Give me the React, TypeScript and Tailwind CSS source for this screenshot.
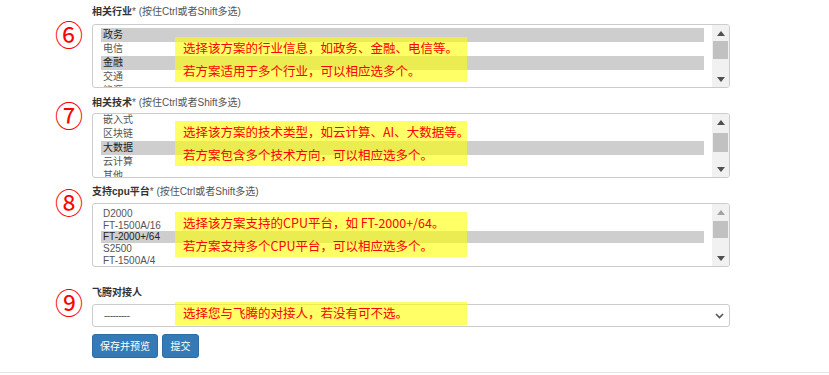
import React from 'react';

type Item = { label: string; sel?: boolean };

const industry: Item[] = [
  { label: '政务', sel: true },
  { label: '电信' },
  { label: '金融', sel: true },
  { label: '交通' },
  { label: '能源' },
];

const tech: Item[] = [
  { label: '嵌入式' },
  { label: '区块链' },
  { label: '大数据', sel: true },
  { label: '云计算' },
  { label: '其他' },
];

const cpu: Item[] = [
  { label: 'D2000' },
  { label: 'FT-1500A/16' },
  { label: 'FT-2000+/64', sel: true },
  { label: 'S2500' },
  { label: 'FT-1500A/4' },
];

function Arrow({ up, dim }: { up?: boolean; dim?: boolean }) {
  return (
    <div className="flex h-[16px] items-center justify-center">
      <svg width="8" height="5" viewBox="0 0 8 5">
        <path d={up ? 'M0 5 L4 0 L8 5 Z' : 'M0 0 L8 0 L4 5 Z'} fill={dim ? '#a3a3a3' : '#505050'} />
      </svg>
    </div>
  );
}

function ListBox({
  items,
  height,
  listClass,
  rowClass,
  thumbClass,
  upDim,
}: {
  items: Item[];
  height: string;
  listClass: string;
  rowClass: string;
  thumbClass: string;
  upDim?: boolean;
}) {
  return (
    <div className={`flex ${height} overflow-hidden rounded-[3px] border border-[#cccccc] bg-white`}>
      <div className={`flex-1 overflow-hidden px-2 ${listClass}`}>
        {items.map((it) => (
          <div
            key={it.label}
            className={`${rowClass} whitespace-nowrap pl-[2px] ${it.sel ? 'bg-[#cecece] text-[#222222]' : 'text-[#555555]'}`}
          >
            {it.label}
          </div>
        ))}
      </div>
      <div className="flex w-[17px] flex-col bg-[#f1f1f1]">
        <Arrow up dim={upDim} />
        <div className="flex-1">
          <div className={`mx-[1px] bg-[#c1c1c1] ${thumbClass}`} />
        </div>
        <Arrow />
      </div>
    </div>
  );
}

function Label({ title, hint }: { title: string; hint?: boolean }) {
  return (
    <div className="h-[14px] whitespace-nowrap text-[10px] leading-[14px] text-[#333333]">
      <span className="font-bold">{title}</span>
      {hint && <span className="text-[#555555]">* (按住Ctrl或者Shift多选)</span>}
    </div>
  );
}

function Note({ lines, className }: { lines: string[]; className: string }) {
  return (
    <div
      className={`absolute left-[175px] w-[292px] bg-[#ffff00]/60 pl-[8px] font-['Noto_Sans_CJK_SC',sans-serif] text-[12.5px] leading-[22.5px] text-[#ff0000] ${className}`}
    >
      {lines.map((l) => (
        <div key={l} className="whitespace-nowrap">
          {l}
        </div>
      ))}
    </div>
  );
}

function Num({ n, className }: { n: string; className: string }) {
  return (
    <div
      className={`absolute left-[54px] flex h-[30px] w-[30px] items-center justify-center font-['Noto_Sans_CJK_SC',sans-serif] text-[28px] leading-none text-[#ff0000] ${className}`}
    >
      {n}
    </div>
  );
}

export default function App() {
  return (
    <div className="relative flex h-[375px] w-[829px] flex-col overflow-hidden bg-white font-['Liberation_Sans','Noto_Sans_CJK_SC',sans-serif]">
      <div className="ml-[92px] w-[638px] pt-[5px] text-[10px]">
        <Label title="相关行业" hint />
        <div className="mt-[5px]">
          <ListBox
            items={industry}
            height="h-[64px]"
            listClass="pt-[3px]"
            rowClass="h-[14px] leading-[14px]"
            thumbClass="mt-0 h-[18px]"
          />
        </div>

        <div className="mt-[8px]">
          <Label title="相关技术" hint />
        </div>
        <div className="mt-[3px]">
          <ListBox
            items={tech}
            height="h-[65px]"
            listClass="-mt-[1px]"
            rowClass="h-[14px] leading-[14px]"
            thumbClass="mt-[3px] h-[19px]"
          />
        </div>

        <div className="mt-[7px]">
          <Label title="支持cpu平台" hint />
        </div>
        <div className="mt-[4px]">
          <ListBox
            items={cpu}
            height="h-[64px]"
            listClass="pt-[4px]"
            rowClass="h-[11.7px] leading-[11.7px]"
            thumbClass="mt-[1px] h-[17px]"
            upDim
          />
        </div>

        <div className="mt-[19px]">
          <Label title="飞腾对接人" />
        </div>
        <div className="mt-[4px] flex h-[23px] items-center justify-between rounded-[3px] border border-[#cccccc] bg-white pl-[11px] pr-[5px] text-[#555555]">
          <span className="tracking-[-0.5px]">---------</span>
          <svg width="9" height="6" viewBox="0 0 9 6">
            <path d="M1 1 L4.5 4.5 L8 1" fill="none" stroke="#555555" strokeWidth="1.6" />
          </svg>
        </div>

        <div className="mt-[7px] flex gap-[4px]">
          <button className="h-[24px] w-[66px] rounded-[3px] border border-[#2e6da4] bg-[#337ab7] text-[10px] text-white">
            保存并预览
          </button>
          <button className="h-[24px] w-[37px] rounded-[3px] border border-[#2e6da4] bg-[#337ab7] text-[10px] text-white">
            提交
          </button>
        </div>
      </div>
      <div className="mt-[14px] h-px w-full bg-[#e5e5e5]" />

      <Num n="⑥" className="top-[19px]" />
      <Num n="⑦" className="top-[100px]" />
      <Num n="⑧" className="top-[187px]" />
      <Num n="⑨" className="top-[287px]" />

      <Note
        className="top-[37px]"
        lines={['选择该方案的行业信息，如政务、金融、电信等。', '若方案适用于多个行业，可以相应选多个。']}
      />
      <Note
        className="top-[121px]"
        lines={['选择该方案的技术类型，如云计算、AI、大数据等。', '若方案包含多个技术方向，可以相应选多个。']}
      />
      <Note
        className="top-[212px]"
        lines={['选择该方案支持的CPU平台，如 FT-2000+/64。', '若方案支持多个CPU平台，可以相应选多个。']}
      />
      <Note className="top-[302px]" lines={['选择您与飞腾的对接人，若没有可不选。']} />
    </div>
  );
}
